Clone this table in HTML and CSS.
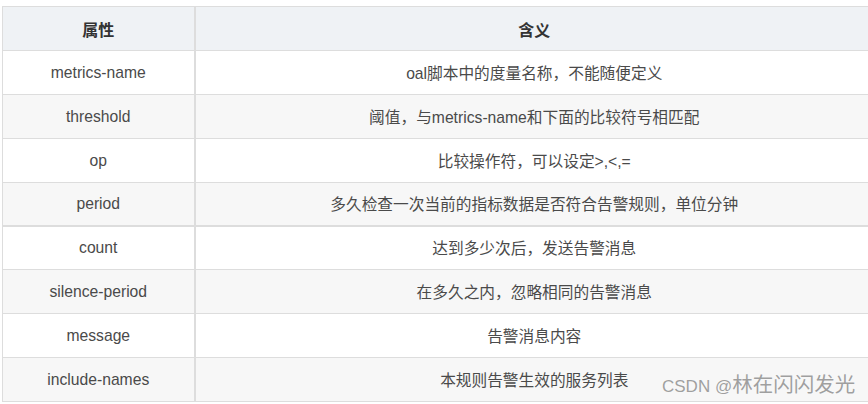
FILE: index.html
```html
<!DOCTYPE html>
<html lang="zh">
<head>
<meta charset="utf-8">
<link rel="stylesheet" href="styles.css">
</head>
<body>
<div class="wrap">
<table class="tbl">
  <thead>
    <tr><th class="c1">属性</th><th class="c2">含义</th></tr>
  </thead>
  <tbody>
    <tr><td>metrics-name</td><td>oal脚本中的度量名称，不能随便定义</td></tr>
    <tr><td>threshold</td><td>阈值，与metrics-name和下面的比较符号相匹配</td></tr>
    <tr><td>op</td><td>比较操作符，可以设定&gt;,&lt;,=</td></tr>
    <tr class="thick"><td>period</td><td>多久检查一次当前的指标数据是否符合告警规则，单位分钟</td></tr>
    <tr><td>count</td><td>达到多少次后，发送告警消息</td></tr>
    <tr><td>silence-period</td><td>在多久之内，忽略相同的告警消息</td></tr>
    <tr><td>message</td><td>告警消息内容</td></tr>
    <tr><td>include-names</td><td>本规则告警生效的服务列表</td></tr>
  </tbody>
</table>
<div class="mark">CSDN @<span class="cn">林在闪闪发光</span></div>
</div>
</body>
</html>
```

FILE: styles.css
```css
html, body {
  margin: 0;
  padding: 0;
  background: #fff;
  overflow: hidden;
}
.wrap {
  position: relative;
  width: 868px;
  height: 404px;
  padding: 6px 0 0 2px;
  box-sizing: border-box;
  overflow: hidden;
}
.tbl {
  border-collapse: collapse;
  width: 872px;
  table-layout: fixed;
  font-family: "Liberation Sans", "Noto Sans CJK SC", sans-serif;
  font-size: 15.7px;
  color: #4a4a4a;
}
.tbl th, .tbl td {
  border: 1px solid #dddddd;
  text-align: center;
  vertical-align: middle;
  height: 44px;
  padding: 0 8px;
  box-sizing: border-box;
}
.tbl th {
  background: #eff2f5;
  color: #333;
  font-weight: bold;
  font-size: 16px;
  height: 44px;
}
.tbl .c1 { width: 192px; }
.tbl th:first-child, .tbl td:first-child {
  border-right: 2px solid #dddddd;
}
.tbl tbody tr:nth-child(even) td {
  background: #f7f7f7;
}
.tbl tr.thick td {
  height: 43px;
  border-bottom: 2px solid #dddddd;
}
.mark {
  position: absolute;
  left: 662px;
  top: 374px;
  line-height: 22px;
  font-family: "Liberation Sans", "Noto Sans CJK SC", sans-serif;
  font-size: 17px;
  color: rgba(130, 130, 130, 0.75);
  white-space: nowrap;
}
.mark .cn {
  font-size: 20.5px;
}
```
